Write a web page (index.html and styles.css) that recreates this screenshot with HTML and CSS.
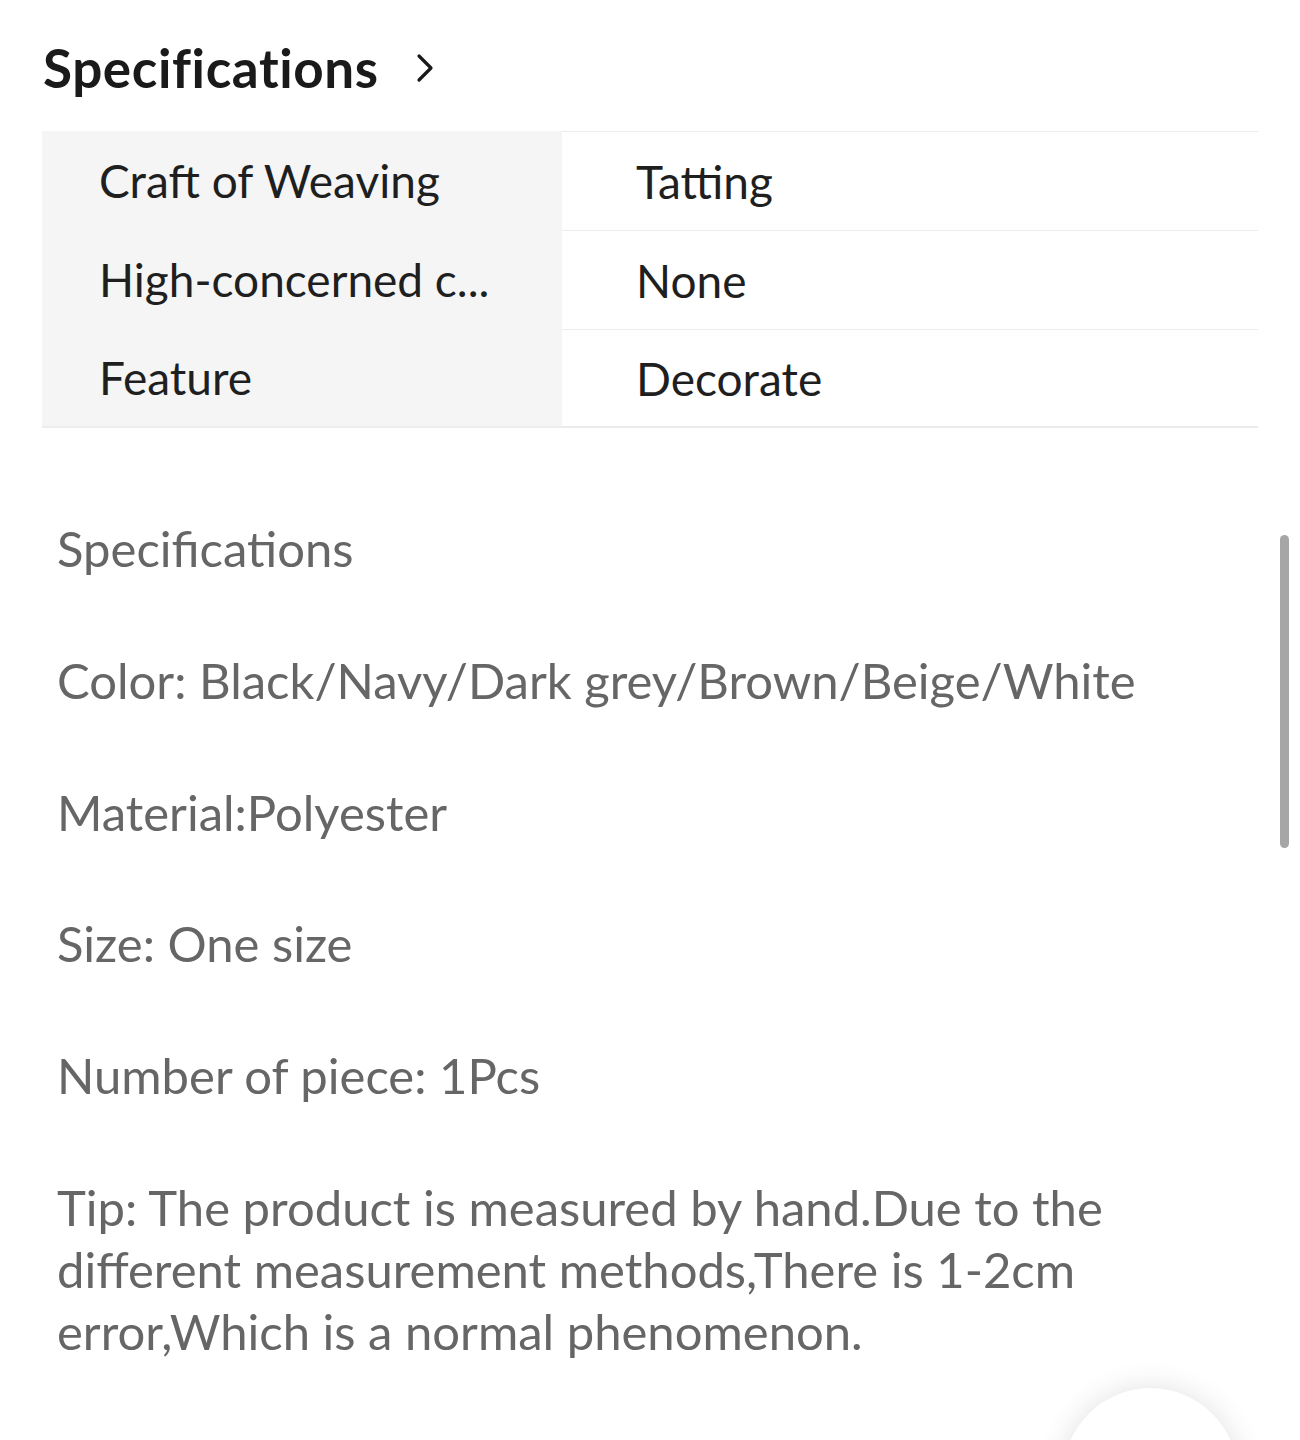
FILE: index.html
```html
<!DOCTYPE html>
<html lang="en">
<head>
<meta charset="utf-8">
<link rel="stylesheet" href="styles.css">
</head>
<body>
<div class="page">
  <div class="header">
    <h1 class="title">Specifications</h1>
    <svg class="chev" width="20" height="30" viewBox="0 0 20 30"><path d="M4 3 L16 15 L4 27" fill="none" stroke="#1a1a1a" stroke-width="3.2" stroke-linecap="round" stroke-linejoin="round"/></svg>
  </div>
  <div class="table">
    <div class="row"><div class="key">Craft of Weaving</div><div class="val">Tatting</div></div>
    <div class="row"><div class="key">High-concerned c...</div><div class="val">None</div></div>
    <div class="row"><div class="key">Feature</div><div class="val">Decorate</div></div>
  </div>
  <div class="desc">
    <p>Specifications</p>
    <p>Color: Black/Navy/Dark grey/Brown/Beige/White</p>
    <p>Material:Polyester</p>
    <p>Size: One size</p>
    <p>Number of piece: 1Pcs</p>
    <p>Tip: The product is measured by hand.Due to the different measurement methods,There is 1-2cm error,Which is a normal phenomenon.</p>
  </div>
</div>
<div class="scrollbar"></div>
<div class="fab"></div>
</body>
</html>
```
FILE: styles.css
```css
html, body {
  margin: 0;
  padding: 0;
  background: #ffffff;
  overflow: hidden;
}
body {
  width: 1300px;
  height: 1440px;
  position: relative;
  font-family: Lato, "Noto Sans", sans-serif;
}
.page {
  padding: 0 42px 0 42px;
}
.header {
  display: flex;
  align-items: center;
  height: 131px;
  padding-left: 1px;
}
.title {
  margin: 4px 0 0 0;
  font-size: 53px;
  font-weight: 700;
  color: #1a1a1a;
  letter-spacing: 0.6px;
}
.chev {
  margin-left: 36px;
  margin-top: 4px;
}
.table {
  width: 1216px;
}
.row {
  display: flex;
  height: 99px;
}
.key {
  width: 520px;
  flex: none;
  background: #f5f5f5;
  box-sizing: border-box;
  padding-left: 57px;
  display: flex;
  align-items: center;
  font-size: 46px;
  color: #1f1f1f;
  white-space: nowrap;
}
.val {
  flex: 1;
  box-sizing: border-box;
  padding-left: 74px;
  display: flex;
  align-items: center;
  font-size: 46px;
  color: #1f1f1f;
  border-top: 1px solid #ececec;
}
.row:last-child .key,
.row:last-child .val {
  border-bottom: 2px solid #ebebeb;
}
.row:last-child .key { border-bottom-color: #ededed; }
.desc {
  padding: 89px 0 0 15px;
  width: 1120px;
}
.desc p {
  margin: 0 0 69.8px 0;
  font-size: 49px;
  line-height: 62px;
  color: #666666;
}
.scrollbar {
  position: absolute;
  left: 1280px;
  top: 535px;
  width: 9px;
  height: 313px;
  border-radius: 5px;
  background: #a6a6a6;
}
.fab {
  position: absolute;
  left: 1063px;
  top: 1388px;
  width: 175px;
  height: 175px;
  border-radius: 50%;
  background: #ffffff;
  box-shadow: 0 0 30px rgba(0,0,0,0.12);
}
```
